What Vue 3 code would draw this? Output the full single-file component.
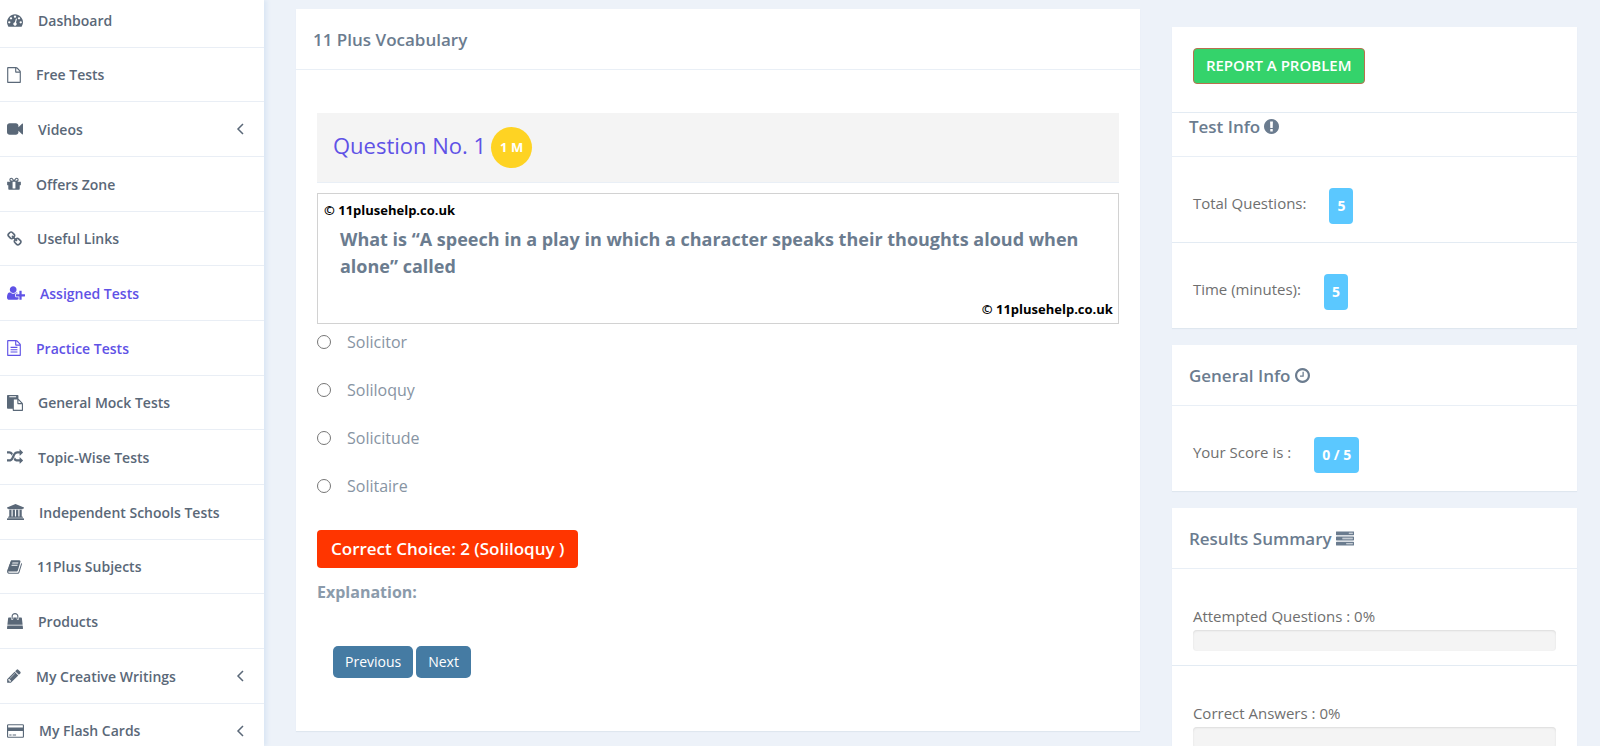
<template>
<div class="page">
  <nav class="sidebar">
    <ul>
      <li v-for="item in menu" :key="item.label">
        <a href="#" :class="{ active: item.active }">
          <svg class="icon" :viewBox="icons[item.icon].box" :style="{ width: item.width + 'px' }">
            <path fill-rule="evenodd" :d="icons[item.icon].path" />
          </svg>
          <span>{{ item.label }}</span>
          <svg v-if="item.children" class="arrow" viewBox="0 0 8 12">
            <path d="M7 1 2 6l5 5" />
          </svg>
        </a>
      </li>
    </ul>
  </nav>

  <main class="content">
    <section class="card quiz">
      <h2 class="card-title">11 Plus Vocabulary</h2>
      <div class="quiz-body">
        <div class="question-bar">
          <h3>Question No. 1</h3>
          <span class="marks">1 M</span>
        </div>

        <div class="question">
          <p class="copyright">© 11plusehelp.co.uk</p>
          <p class="question-text">What is “A speech in a play in which a character speaks their thoughts aloud when alone” called</p>
          <p class="copyright right">© 11plusehelp.co.uk</p>
        </div>

        <div class="options">
          <label v-for="(option, index) in options" :key="option">
            <input v-model="answer" type="radio" name="answer" :value="index + 1">
            <span>{{ option }}</span>
          </label>
        </div>

        <p class="correct">Correct Choice: 2 (Soliloquy )</p>
        <p class="explanation">Explanation:</p>

        <div class="pager">
          <button type="button">Previous</button>
          <button type="button">Next</button>
        </div>
      </div>
    </section>

    <aside class="info">
      <section class="card">
        <div class="report">
          <button type="button">REPORT A PROBLEM</button>
        </div>
        <h2 class="card-title compact">
          Test Info
          <svg class="title-icon" :viewBox="icons.exclamation.box"><path fill-rule="evenodd" :d="icons.exclamation.path" /></svg>
        </h2>
        <div class="row">Total Questions: <span class="value">5</span></div>
        <div class="row">Time (minutes): <span class="value">5</span></div>
      </section>

      <section class="card">
        <h2 class="card-title">
          General Info
          <svg class="title-icon" :viewBox="icons.clock.box"><path fill-rule="evenodd" :d="icons.clock.path" /></svg>
        </h2>
        <div class="row">Your Score is : <span class="value">0 / 5</span></div>
      </section>

      <section class="card">
        <h2 class="card-title">
          Results Summary
          <svg class="title-icon wide" :viewBox="icons.tasks.box">
            <path fill-rule="evenodd" :d="icons.tasks.path" />
            <path opacity="0.4" d="M1280 256h384v128h-384zM640 768h1024v128h-1024zM1024 1280h640v128h-640z" />
          </svg>
        </h2>
        <div v-for="result in results" :key="result.label" class="result">
          <p>{{ result.label }} : {{ result.percent }}%</p>
          <div class="progress" role="progressbar" :aria-label="result.label" :aria-valuenow="result.percent">
            <div class="progress-bar" :style="{ width: result.percent + '%' }"></div>
          </div>
        </div>
      </section>
    </aside>
  </main>
</div>
</template>

<script setup>
import { ref } from 'vue';

const answer = ref(null);

const options = ['Solicitor', 'Soliloquy', 'Solicitude', 'Solitaire'];

const results = [
  { label: 'Attempted Questions', percent: 0 },
  { label: 'Correct Answers', percent: 0 },
];

const menu = [
  { label: 'Dashboard', icon: 'dashboard', width: 16 },
  { label: 'Free Tests', icon: 'file', width: 14 },
  { label: 'Videos', icon: 'video', width: 16, children: true },
  { label: 'Offers Zone', icon: 'gift', width: 14 },
  { label: 'Useful Links', icon: 'link', width: 15 },
  { label: 'Assigned Tests', icon: 'userPlus', width: 18, active: true },
  { label: 'Practice Tests', icon: 'fileText', width: 14, active: true },
  { label: 'General Mock Tests', icon: 'paste', width: 16 },
  { label: 'Topic-Wise Tests', icon: 'random', width: 16 },
  { label: 'Independent Schools Tests', icon: 'bank', width: 17 },
  { label: '11Plus Subjects', icon: 'book', width: 15 },
  { label: 'Products', icon: 'bag', width: 16 },
  { label: 'My Creative Writings', icon: 'pencil', width: 14, children: true },
  { label: 'My Flash Cards', icon: 'card', width: 17, children: true },
];

const filePath = 'M1596 380q28 28 48 76t20 88v1152q0 40-28 68t-68 28h-1344q-40 0-68-28t-28-68v-1600q0-40 28-68t68-28h896q40 0 88 20t76 48zm-444-244v376h376q-10-29-22-41l-313-313q-12-12-41-22zm384 1528v-1024h-416q-40 0-68-28t-28-68v-416h-768v1536h1280z';

const icons = {
  dashboard: {
    box: '0 0 1792 1792',
    path: 'M384 1152q0-53-37.5-90.5t-90.5-37.5-90.5 37.5-37.5 90.5 37.5 90.5 90.5 37.5 90.5-37.5 37.5-90.5zm192-448q0-53-37.5-90.5t-90.5-37.5-90.5 37.5-37.5 90.5 37.5 90.5 90.5 37.5 90.5-37.5 37.5-90.5zm428 481l101-382q6-26-7.5-48.5t-38.5-29.5-48 6.5-30 39.5l-101 382q-60 5-107 43.5t-63 98.5q-20 77 20 146t117 89 146-20 89-117q16-60-6-117t-72-91zm660-33q0-53-37.5-90.5t-90.5-37.5-90.5 37.5-37.5 90.5 37.5 90.5 90.5 37.5 90.5-37.5 37.5-90.5zm-640-640q0-53-37.5-90.5t-90.5-37.5-90.5 37.5-37.5 90.5 37.5 90.5 90.5 37.5 90.5-37.5 37.5-90.5zm448 192q0-53-37.5-90.5t-90.5-37.5-90.5 37.5-37.5 90.5 37.5 90.5 90.5 37.5 90.5-37.5 37.5-90.5zm320 448q0 261-141 483-19 29-54 29h-1402q-35 0-54-29-141-221-141-483 0-182 71-348t191-286 286-191 348-71 348 71 286 191 191 286 71 348z',
  },
  file: { box: '128 0 1536 1792', path: filePath },
  video: {
    box: '0 0 1792 1792',
    path: 'M1792 352v1088q0 42-39 59-13 5-25 5-27 0-45-19l-403-403v166q0 119-84.5 203.5t-203.5 84.5h-704q-119 0-203.5-84.5t-84.5-203.5v-704q0-119 84.5-203.5t203.5-84.5h704q119 0 203.5 84.5t84.5 203.5v165l403-402q18-19 45-19 12 0 25 5 39 17 39 59z',
  },
  gift: {
    box: '128 0 1536 1792',
    path: 'M1056 1356v-716h-320v716q0 25 18 38.5t46 13.5h192q28 0 46-13.5t18-38.5zm-456-844h195l-126-161q-26-31-69-31-40 0-68 28t-28 68 28 68 68 28zm688-96q0-40-28-68t-68-28q-43 0-69 31l-125 161h194q40 0 68-28t28-68zm376 256v320q0 14-9 23t-23 9h-96v416q0 40-28 68t-68 28h-1088q-40 0-68-28t-28-68v-416h-96q-14 0-23-9t-9-23v-320q0-14 9-23t23-9h440q-93 0-158.5-65.5t-65.5-158.5 65.5-158.5 158.5-65.5q107 0 168 77l128 165 128-165q61-77 168-77 93 0 158.5 65.5t65.5 158.5-65.5 158.5-158.5 65.5h440q14 0 23 9t9 23z',
  },
  link: {
    box: '64 0 1664 1792',
    path: 'M1520 1216q0-40-28-68l-208-208q-28-28-68-28-42 0-72 32 3 3 19 18.5t21.5 21.5 15 19 13 25.5 3.5 27.5q0 40-28 68t-68 28q-15 0-27.5-3.5t-25.5-13-19-15-21.5-21.5-18.5-19q-33 31-33 73 0 40 28 68l206 207q27 27 68 27 40 0 68-26l147-146q28-28 28-67zm-703-705q0-40-28-68l-206-207q-28-28-68-28-39 0-68 27l-147 146q-28 28-28 67 0 40 28 68l208 208q27 27 68 27 42 0 72-31-3-3-19-18.5t-21.5-21.5-15-19-13-25.5-3.5-27.5q0-40 28-68t68-28q15 0 27.5 3.5t25.5 13 19 15 21.5 21.5 18.5 19q33-31 33-73zm895 705q0 120-85 203l-147 146q-83 83-203 83-121 0-204-85l-206-207q-83-83-83-203 0-123 88-209l-88-88q-86 88-208 88-120 0-204-84l-208-208q-84-84-84-204t85-203l147-146q83-83 203-83 121 0 204 85l206 207q83 83 83 203 0 123-88 209l88 88q86-88 208-88 120 0 204 84l208 208q84 84 84 204z',
  },
  userPlus: {
    box: '0 0 2048 1792',
    path: 'M704 896q-159 0-271.5-112.5t-112.5-271.5 112.5-271.5 271.5-112.5 271.5 112.5 112.5 271.5-112.5 271.5-271.5 112.5zm960 128h352q13 0 22.5 9.5t9.5 22.5v192q0 13-9.5 22.5t-22.5 9.5h-352v352q0 13-9.5 22.5t-22.5 9.5h-192q-13 0-22.5-9.5t-9.5-22.5v-352h-352q-13 0-22.5-9.5t-9.5-22.5v-192q0-13 9.5-22.5t22.5-9.5h352v-352q0-13 9.5-22.5t22.5-9.5h192q13 0 22.5 9.5t9.5 22.5v352zm-736 224q0 52 38 90t90 38h256v238q-68 50-171 50h-874q-121 0-194-69t-73-190q0-53 3.5-103.5t14-109 26.5-108.5 43-97.5 62-81 85.5-53.5 111.5-20q19 0 39 17 79 61 154.5 91.5t164.5 30.5 164.5-30.5 154.5-91.5q20-17 39-17 132 0 217 96h-223q-52 0-90 38t-38 90v192z',
  },
  fileText: {
    box: '128 0 1536 1792',
    path: filePath + 'M512 768h768v128h-768zM512 1024h768v128h-768zM512 1280h768v128h-768z',
  },
  paste: {
    box: '0 0 1792 1792',
    path: 'M768 1664h896v-640h-416q-40 0-68-28t-28-68v-416h-384v1152zm256-1440v-64q0-13-9.5-22.5t-22.5-9.5h-704q-13 0-22.5 9.5t-9.5 22.5v64q0 13 9.5 22.5t22.5 9.5h704q13 0 22.5-9.5t9.5-22.5zm256 672h299l-299-299v299zm512 128v672q0 40-28 68t-68 28h-960q-40 0-68-28t-28-68v-160h-544q-40 0-68-28t-28-68v-1344q0-40 28-68t68-28h1088q40 0 68 28t28 68v328q21 13 36 28l408 408q28 28 48 76t20 88z',
  },
  random: {
    box: '0 0 1792 1792',
    path: 'M666 481q-60 92-137 273-22-45-37-72.5t-40.5-63.5-51-56.5-63-35-81.5-14.5h-224q-14 0-23-9t-9-23v-192q0-14 9-23t23-9h224q250 0 410 225zm1126 799q0 14-9 23l-320 320q-9 9-23 9-13 0-22.5-9.5t-9.5-22.5v-192q-32 0-85 .5t-81 1-73-1-71-5-64-10.5-63-18.5-58-28.5-59-40-55-53.5-56-69.5q59-93 136-273 22 45 37 72.5t40.5 63.5 51 56.5 63 35 81.5 14.5h256v-192q0-14 9-23t23-9q12 0 24 10l319 319q9 9 9 23zm0-896q0 14-9 23l-320 320q-9 9-23 9-13 0-22.5-9.5t-9.5-22.5v-192h-256q-48 0-87 15t-69 45-51 61.5-45 77.5q-32 62-78 171-29 66-49.5 111t-54 105-64 100-74 83-90 68.5-106.5 42-128 16.5h-224q-14 0-23-9t-9-23v-192q0-14 9-23t23-9h224q48 0 87-15t69-45 51-61.5 45-77.5q32-62 78-171 29-66 49.5-111t54-105 64-100 74-83 90-68.5 106.5-42 128-16.5h256v-192q0-14 9-23t23-9q12 0 24 10l319 319q9 9 9 23z',
  },
  bank: {
    box: '0 0 1920 1792',
    path: 'M960 0l960 384v128h-128q0 26-20.5 45t-48.5 19h-1526q-28 0-48.5-19t-20.5-45h-128v-128zM256 640h256v768h128v-768h256v768h128v-768h256v768h128v-768h256v768h59q28 0 48.5 19t20.5 45v64h-1664v-64q0-26 20.5-45t48.5-19h59zM69 1600h1782q28 0 48.5 19t20.5 45v128h-1920v-128q0-26 20.5-45t48.5-19z',
  },
  book: {
    box: '64 0 1664 1792',
    path: 'M1703 478q40 57 18 129l-275 906q-19 64-76.5 107.5t-122.5 43.5h-923q-77 0-148.5-53.5t-99.5-131.5q-24-67-2-127 0-4 3-27t4-37q1-8-3-21.5t-3-19.5q2-11 8-21t16.5-23.5 16.5-23.5q23-38 45-91.5t30-91.5q3-10 .5-30t-.5-28q3-11 17-28t17-23q21-36 42-92t25-90q1-9-2.5-32t.5-28q4-13 22-30.5t22-22.5q19-26 42.5-84.5t27.5-96.5q1-8-3-25.5t-2-26.5q2-8 9-18t18-23 17-21q8-12 16.5-30.5t15-35 16-36 19.5-32 26.5-23.5 36-11.5 47.5 5.5l-1 3q38-9 51-9h761q74 0 114 56t18 130l-274 906q-36 119-71.5 153.5t-128.5 34.5h-869q-27 0-38 15-11 16-1 43 24 70 144 70h923q29 0 56-15.5t35-41.5l300-987q7-22 5-57 38 15 59 43zm-1064 2q-4 13 2 22.5t20 9.5h608q13 0 25.5-9.5t16.5-22.5l21-64q4-13-2-22.5t-20-9.5h-608q-13 0-25.5 9.5t-16.5 22.5zm-83 256q-4 13 2 22.5t20 9.5h608q13 0 25.5-9.5t16.5-22.5l21-64q4-13-2-22.5t-20-9.5h-608q-13 0-25.5 9.5t-16.5 22.5z',
  },
  bag: {
    box: '0 0 1792 1792',
    path: 'M35 1408h1722l35 313q3 28-16 50-19 21-48 21h-1664q-29 0-48-21-19-22-16-50zM1664 573l86 739h-1708l86-739q3-25 21-42t43-17h256v128q0 53 37.5 90.5t90.5 37.5 90.5-37.5 37.5-90.5v-128h384v128q0 53 37.5 90.5t90.5 37.5 90.5-37.5 37.5-90.5v-128h256q25 0 43 17t21 42zM1280 384v256q0 26-19 45t-45 19-45-19-19-45v-256q0-106-75-181t-181-75-181 75-75 181v256q0 26-19 45t-45 19-45-19-19-45v-256q0-159 112.5-271.5t271.5-112.5 271.5 112.5 112.5 271.5z',
  },
  pencil: {
    box: '128 0 1536 1792',
    path: 'M491 1536l91-91-235-235-91 91v107h128v128h107zm523-928q0-22-22-22-10 0-17 7l-542 542q-7 7-7 17 0 22 22 22 10 0 17-7l542-542q7-7 7-17zm-54-192l416 416-832 832h-416v-416zm683 96q0 53-37 90l-166 166-416-416 166-165q36-38 90-38 53 0 91 38l235 234q37 39 37 91z',
  },
  card: {
    box: '0 0 1920 1792',
    path: 'M160 128h1600q66 0 113 47t47 113v1216q0 66-47 113t-113 47h-1600q-66 0-113-47t-47-113v-1216q0-66 47-113t113-47zM160 256q-32 0-32 32v224h1664v-224q0-32-32-32zM128 896v608q0 32 32 32h1600q32 0 32-32v-608zM256 1280h256v128h-256zM640 1280h384v128h-384z',
  },
  exclamation: {
    box: '128 128 1536 1536',
    path: 'M896 128q209 0 385.5 103t279.5 279.5 103 385.5-103 385.5-279.5 279.5-385.5 103-385.5-103-279.5-279.5-103-385.5 103-385.5 279.5-279.5 385.5-103zm128 1247v-190q0-14-9-23.5t-22-9.5h-192q-13 0-23 10t-10 23v190q0 13 10 23t23 10h192q13 0 22-9.5t9-23.5zm-2-344l18-621q0-12-10-18-10-8-24-8h-220q-14 0-24 8-10 6-10 18l17 621q0 10 10 17.5t24 7.5h185q14 0 23.5-7.5t10.5-17.5z',
  },
  clock: {
    box: '128 128 1536 1536',
    path: 'M1024 544v448q0 14-9 23t-23 9h-320q-14 0-23-9t-9-23v-64q0-14 9-23t23-9h224v-352q0-14 9-23t23-9h64q14 0 23 9t9 23zm416 352q0-148-73-273t-198-198-273-73-273 73-198 198-73 273 73 273 198 198 273 73 273-73 198-198 73-273zm224 0q0 209-103 385.5t-279.5 279.5-385.5 103-385.5-103-279.5-279.5-103-385.5 103-385.5 279.5-279.5 385.5-103 385.5 103 279.5 279.5 103 385.5z',
  },
  tasks: {
    box: '0 128 1792 1408',
    path: 'M64 128h1664q26 0 45 19t19 45v256q0 26-19 45t-45 19h-1664q-26 0-45-19t-19-45v-256q0-26 19-45t45-19zM1280 256v128h384v-128zM64 640h1664q26 0 45 19t19 45v256q0 26-19 45t-45 19h-1664q-26 0-45-19t-19-45v-256q0-26 19-45t45-19zM640 768v128h1024v-128zM64 1152h1664q26 0 45 19t19 45v256q0 26-19 45t-45 19h-1664q-26 0-45-19t-19-45v-256q0-26 19-45t45-19zM1024 1280v128h640v-128z',
  },
};
</script>

<style>
body {
  margin: 0;
  background-color: #edf2f9;
}
</style>

<style scoped>
.page {
  display: flex;
  height: 100vh;
  overflow: hidden;
  font-family: "Open Sans", "Noto Sans", sans-serif;
  font-size: 15px;
  color: #6f6f6f;
}
h2,
h3,
p,
ul {
  margin: 0;
  padding: 0;
}
button {
  font-family: inherit;
  color: #fff;
  cursor: pointer;
}
.sidebar {
  flex: none;
  width: 264px;
  background-color: #fff;
  box-shadow: 3px 0 4px #dce7f4;
}
.sidebar ul {
  margin-top: -7px;
  list-style: none;
}
.sidebar a {
  display: flex;
  align-items: center;
  height: 54px;
  padding: 0 20px 0 7px;
  border-bottom: 1px solid #e9eef5;
  font-size: 14px;
  font-weight: 600;
  color: #5a6878;
  text-decoration: none;
}
.sidebar li:nth-child(3n + 2) a {
  height: 53px;
}
.sidebar a.active {
  color: #5f52e6;
}
.icon {
  flex: none;
  height: 16px;
  margin-right: 15px;
  fill: currentColor;
}
.arrow {
  width: 8px;
  height: 12px;
  margin-left: auto;
  fill: none;
  stroke: currentColor;
  stroke-width: 1.5;
}
.content {
  flex: 1;
  display: grid;
  grid-template-columns: 25fr 12fr;
  align-items: start;
  gap: 32px;
  padding: 9px 23px 0 32px;
}
.card {
  background-color: #fff;
  box-shadow: 0 1px 1px #dfe7ef;
}
.card-title {
  display: flex;
  align-items: center;
  gap: 4px;
  height: 60px;
  padding: 0 17px;
  border-bottom: 1px solid #e9eff6;
  font-size: 17px;
  font-weight: 600;
  color: #6b7c8f;
}
.card-title.compact {
  height: 44px;
  box-sizing: border-box;
  padding-bottom: 16px;
}
.title-icon {
  width: 15px;
  height: 15px;
  fill: currentColor;
}
.title-icon.wide {
  width: 18px;
}
.quiz-body {
  padding: 43px 21px 53px;
}
.question-bar {
  display: flex;
  align-items: center;
  gap: 5px;
  height: 69px;
  padding: 0 16px;
  background-color: #f4f4f4;
  border-bottom: 1px solid #e9eff6;
}
.question-bar h3 {
  padding-bottom: 6px;
  font-size: 22px;
  font-weight: 500;
  color: #5f52e6;
}
.marks {
  width: 41px;
  border-radius: 50%;
  background-color: #fed323;
  font-size: 13px;
  font-weight: 700;
  line-height: 41px;
  text-align: center;
  color: #fff;
}
.question {
  margin-top: 10px;
  padding: 6px 5px 3px 6px;
  border: 1px solid #d2d2d2;
}
.copyright {
  font-size: 13px;
  font-weight: 700;
  line-height: 21px;
  color: #000;
}
.copyright.right {
  text-align: right;
}
.question-text {
  margin: 5px 0 19px;
  padding: 0 16px;
  font-size: 18px;
  font-weight: 700;
  line-height: 27px;
  color: #6b7c8f;
}
.options {
  padding-top: 6px;
}
.options label {
  display: flex;
  align-items: center;
  gap: 16px;
  height: 24px;
  margin-bottom: 24px;
  font-size: 16px;
  color: #8794a3;
}
.options input {
  width: 14px;
  height: 14px;
  margin: 0;
}
.correct {
  width: fit-content;
  margin-top: 32px;
  padding: 0 14px;
  border-radius: 4px;
  background-color: #ff3500;
  font-size: 17px;
  font-weight: 600;
  line-height: 38px;
  color: #fff;
}
.explanation {
  margin-top: 12px;
  font-size: 16px;
  font-weight: 700;
  line-height: 24px;
  color: #8b9bab;
}
.pager {
  display: flex;
  gap: 3px;
  margin-top: 42px;
  padding-left: 16px;
}
.pager button {
  height: 32px;
  padding: 0 12px 2px;
  border: 0;
  border-radius: 5px;
  background-color: #457ba3;
  font-size: 14px;
}
.info {
  display: flex;
  flex-direction: column;
  gap: 17px;
  padding-top: 18px;
}
.report {
  padding: 21px 21px 28px;
  border-bottom: 1px solid #e3ebf3;
}
.report button {
  height: 36px;
  padding: 0 12px 2px;
  border: 1px solid #b8704e;
  border-radius: 4px;
  background-color: #34d36b;
  font-size: 15px;
  font-weight: 600;
}
.row {
  display: flex;
  align-items: flex-start;
  gap: 23px;
  height: 37px;
  padding: 31px 21px 17px;
  line-height: 31px;
}
.row + .row {
  border-top: 1px solid #e3ebf3;
}
.value {
  padding: 0 8px;
  border-radius: 4px;
  background-color: #5bc8ff;
  font-size: 14px;
  font-weight: 700;
  line-height: 36px;
  color: #fff;
}
.result {
  padding: 36px 21px 14px;
}
.result + .result {
  border-top: 1px solid #e3ebf3;
}
.result p {
  margin-bottom: 3px;
  line-height: 22px;
}
.progress {
  height: 21px;
  overflow: hidden;
  border-radius: 4px;
  background-color: #f4f4f4;
  box-shadow: inset 0 1px 2px #dcdcdc;
}
.progress-bar {
  height: 100%;
  background-color: #5bc8ff;
}
</style>
